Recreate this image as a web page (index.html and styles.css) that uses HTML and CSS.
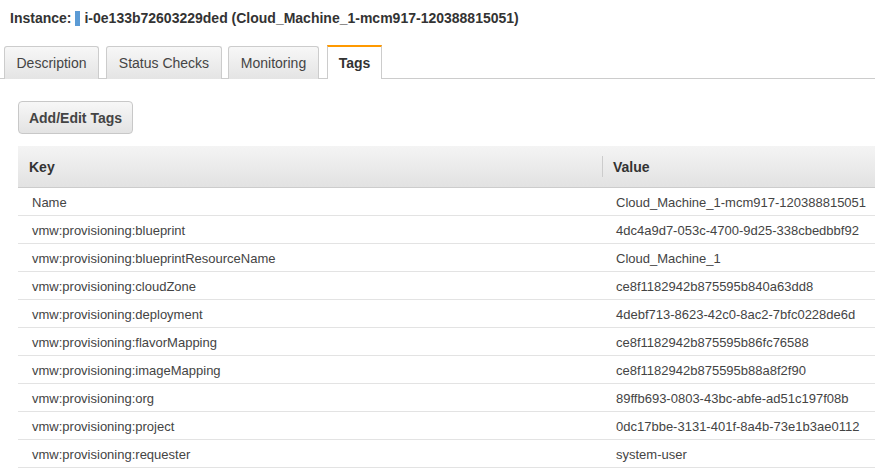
FILE: index.html
```html
<!DOCTYPE html>
<html>
<head>
<meta charset="utf-8">
<link rel="stylesheet" href="styles.css">
</head>
<body>
<div class="title">
  <span class="label">Instance:</span>
  <span class="bar"></span>
  <span class="id">i-0e133b72603229ded (Cloud_Machine_1-mcm917-120388815051)</span>
</div>
<div class="tabs">
  <div class="tab t-desc">Description</div>
  <div class="tab t-status">Status Checks</div>
  <div class="tab t-mon">Monitoring</div>
  <div class="tab active t-tags">Tags</div>
</div>
<div class="content">
  <button class="btn">Add/Edit Tags</button>
  <div class="tags">
    <div class="row head">
      <div class="c-key">Key</div><div class="c-val"><span class="sep"></span>Value</div>
    </div>
    <div class="row"><div class="c-key">Name</div><div class="c-val">Cloud_Machine_1-mcm917-120388815051</div></div>
    <div class="row"><div class="c-key">vmw:provisioning:blueprint</div><div class="c-val">4dc4a9d7-053c-4700-9d25-338cbedbbf92</div></div>
    <div class="row"><div class="c-key">vmw:provisioning:blueprintResourceName</div><div class="c-val">Cloud_Machine_1</div></div>
    <div class="row"><div class="c-key">vmw:provisioning:cloudZone</div><div class="c-val">ce8f1182942b875595b840a63dd8</div></div>
    <div class="row"><div class="c-key">vmw:provisioning:deployment</div><div class="c-val">4debf713-8623-42c0-8ac2-7bfc0228de6d</div></div>
    <div class="row"><div class="c-key">vmw:provisioning:flavorMapping</div><div class="c-val">ce8f1182942b875595b86fc76588</div></div>
    <div class="row"><div class="c-key">vmw:provisioning:imageMapping</div><div class="c-val">ce8f1182942b875595b88a8f2f90</div></div>
    <div class="row"><div class="c-key">vmw:provisioning:org</div><div class="c-val">89ffb693-0803-43bc-abfe-ad51c197f08b</div></div>
    <div class="row"><div class="c-key">vmw:provisioning:project</div><div class="c-val">0dc17bbe-3131-401f-8a4b-73e1b3ae0112</div></div>
    <div class="row"><div class="c-key">vmw:provisioning:requester</div><div class="c-val">system-user</div></div>
  </div>
</div>
</body>
</html>
```
FILE: styles.css
```css
html, body {
  margin: 0;
  padding: 0;
  background: #fff;
  font-family: "Liberation Sans", Arial, sans-serif;
  color: #444;
}
.title {
  display: flex;
  align-items: center;
  height: 20px;
  padding: 8px 0 0 10px;
  font-size: 14px;
  font-weight: bold;
  color: #333;
}
.title .bar {
  display: inline-block;
  width: 5px;
  height: 15px;
  background: #5b9bd5;
  margin: 0 4px 0 4px;
}
.tabs {
  display: flex;
  margin-top: 18px;
  padding-left: 4px;
  border-bottom: 1px solid #ccc;
  height: 32px;
  align-items: flex-end;
}
.tab {
  box-sizing: border-box;
  height: 33px;
  margin-bottom: -1px;
  border: 1px solid #ccc;
  border-bottom: none;
  border-radius: 3px 3px 0 0;
  background: linear-gradient(#f7f7f7, #e4e4e4);
  font-size: 14px;
  color: #444;
  display: flex;
  align-items: center;
  justify-content: center;
}
.t-desc { width: 95px; margin-right: 7px; }
.t-status { width: 116px; margin-right: 6px; }
.t-mon { width: 91px; margin-right: 8px; }
.t-tags { width: 55px; }
.tab.active {
  background: #fff;
  border-top: 2px solid #f90;
  border-radius: 0;
  font-weight: bold;
  color: #333;
  height: 34px;
}
.content {
  padding: 22px 0 0 18px;
}
.btn {
  display: block;
  box-sizing: border-box;
  width: 115px;
  height: 33px;
  border: 1px solid #c8c8c8;
  border-radius: 4px;
  background: linear-gradient(#f7f7f7, #e3e3e3);
  font-family: inherit;
  font-size: 14px;
  font-weight: bold;
  color: #444;
  padding: 0;
  cursor: pointer;
}
.tags {
  margin-top: 12px;
  font-size: 13px;
}
.row {
  display: grid;
  grid-template-columns: 584px 1fr;
  align-items: center;
  box-sizing: border-box;
  height: 28px;
  padding-top: 2px;
  border-bottom: 1px solid #e3e3e3;
  color: #444;
}
.row .c-key { padding-left: 14px; }
.row .c-val { padding-left: 14px; }
.row.head {
  height: 42px;
  padding-top: 0;
  background: linear-gradient(#f4f4f4, #e2e2e2);
  border-bottom: 1px solid #ccc;
  font-size: 14px;
  font-weight: bold;
  color: #333;
}
.row.head .c-key { padding-left: 11px; }
.row.head .c-val {
  position: relative;
  padding-left: 11px;
  height: 100%;
  display: flex;
  align-items: center;
}
.sep {
  position: absolute;
  left: 0;
  top: 10px;
  height: 21px;
  border-left: 1px solid #ccc;
}
```
